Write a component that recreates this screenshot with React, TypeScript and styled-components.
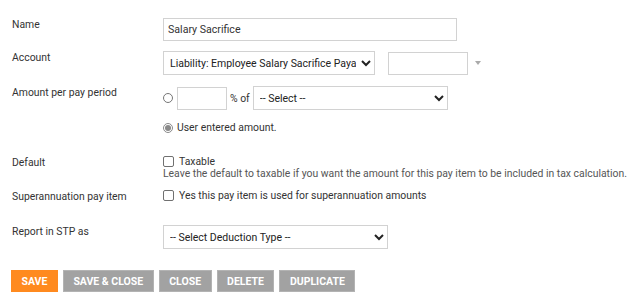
import React from 'react';
import styled, { createGlobalStyle } from 'styled-components';

const GlobalStyle = createGlobalStyle`
  body {
    margin: 0;
    background: #ffffff;
    font-family: Roboto, 'Liberation Sans', sans-serif;
    font-size: 10.4px;
    color: #333333;
  }
`;

const Form = styled.form`
  padding: 18px 12px 0 11px;
`;

const Row = styled.div<{ $gap: number }>`
  display: grid;
  grid-template-columns: 151px 1fr;
  align-items: start;
  margin-bottom: ${(p) => p.$gap}px;
  padding-left: 1px;
`;

const Label = styled.label`
  line-height: 13px;
  color: #333333;
`;

const Control = styled.div`
  display: flex;
  flex-direction: column;
`;

const Line = styled.div<{ $top?: number; $lh?: number }>`
  display: flex;
  align-items: center;
  margin-top: ${(p) => p.$top ?? 0}px;
  line-height: ${(p) => p.$lh ?? 13}px;
`;

const TextInput = styled.input<{ $w: number }>`
  box-sizing: border-box;
  width: ${(p) => p.$w}px;
  height: 23px;
  border: 1px solid #d2d2d2;
  padding: 0 4px;
  font-family: Roboto, 'Liberation Sans', sans-serif;
  font-size: 10.6px;
  color: #333333;
  outline: none;
`;

const Select = styled.select<{ $w: number }>`
  box-sizing: border-box;
  width: ${(p) => p.$w}px;
  height: 24px;
  border: 1px solid #d2d2d2;
  border-radius: 0;
  background: #ffffff;
  padding: 0 2px;
  font-family: Roboto, 'Liberation Sans', sans-serif;
  font-size: 10.5px;
  color: #222222;
  outline: none;
`;

const Caret = styled.span`
  margin-left: 7px;
  width: 0;
  height: 0;
  border-left: 3px solid transparent;
  border-right: 3px solid transparent;
  border-top: 4px solid #aaaaaa;
`;

const Radio = styled.input.attrs({ type: 'radio' })`
  width: 10px;
  height: 10px;
  margin: 0 4px 0 0;
  accent-color: #8a8a8a;
`;

const Check = styled.input.attrs({ type: 'checkbox' })`
  appearance: none;
  box-sizing: border-box;
  width: 11px;
  height: 11px;
  margin: 0 5px 0 0;
  border: 1px solid #707070;
  border-radius: 2px;
  background: #ffffff;
`;

const Inline = styled.span<{ $l?: number; $r?: number }>`
  margin-left: ${(p) => p.$l ?? 0}px;
  margin-right: ${(p) => p.$r ?? 0}px;
  color: #333333;
`;

const Help = styled.div`
  line-height: 13px;
  color: #555555;
  white-space: nowrap;
`;

const Buttons = styled.div`
  display: flex;
  gap: 5px;
`;

const Button = styled.button<{ $primary?: boolean }>`
  height: 22px;
  padding: 0 9.5px;
  border: 1px solid ${(p) => (p.$primary ? '#ff8a1f' : '#b3b3b3')};
  background: ${(p) => (p.$primary ? '#ff8a1f' : '#a2a2a2')};
  color: #ffffff;
  font-family: Roboto, 'Liberation Sans', sans-serif;
  font-size: 10.5px;
  font-weight: 700;
  text-transform: uppercase;
  cursor: pointer;
`;

export default function App() {
  return (
    <>
      <GlobalStyle />
      <Form onSubmit={(e) => e.preventDefault()}>
        <Row $gap={10}>
          <Label>Name</Label>
          <Control>
            <TextInput $w={294} defaultValue="Salary Sacrifice" />
          </Control>
        </Row>
        <Row $gap={11}>
          <Label>Account</Label>
          <Line>
            <Select $w={212} defaultValue="sal">
              <option value="sal">Liability: Employee Salary Sacrifice Payable</option>
            </Select>
            <TextInput $w={80} style={{ marginLeft: 13 }} />
            <Caret />
          </Line>
        </Row>
        <Row $gap={22}>
          <Label>Amount per pay period</Label>
          <Control>
            <Line>
              <Radio name="amt" />
              <TextInput $w={50} />
              <Inline $l={3} $r={3}>% of</Inline>
              <Select $w={195} defaultValue="">
                <option value="">-- Select --</option>
              </Select>
            </Line>
            <Line $top={11}>
              <Radio name="amt" defaultChecked />
              <Inline>User entered amount.</Inline>
            </Line>
          </Control>
        </Row>
        <Row $gap={10}>
          <Label>Default</Label>
          <Control>
            <Line $lh={11}>
              <Check />
              <Inline>Taxable</Inline>
            </Line>
            <Help>Leave the default to taxable if you want the amount for this pay item to be included in tax calculation.</Help>
          </Control>
        </Row>
        <Row $gap={22}>
          <Label>Superannuation pay item</Label>
          <Line $lh={11}>
            <Check />
            <Inline>Yes this pay item is used for superannuation amounts</Inline>
          </Line>
        </Row>
        <Row $gap={21}>
          <Label>Report in STP as</Label>
          <Control>
            <Select $w={225} defaultValue="">
              <option value="">-- Select Deduction Type --</option>
            </Select>
          </Control>
        </Row>
        <Buttons>
          <Button $primary>Save</Button>
          <Button>Save &amp; Close</Button>
          <Button>Close</Button>
          <Button>Delete</Button>
          <Button>Duplicate</Button>
        </Buttons>
      </Form>
    </>
  );
}
